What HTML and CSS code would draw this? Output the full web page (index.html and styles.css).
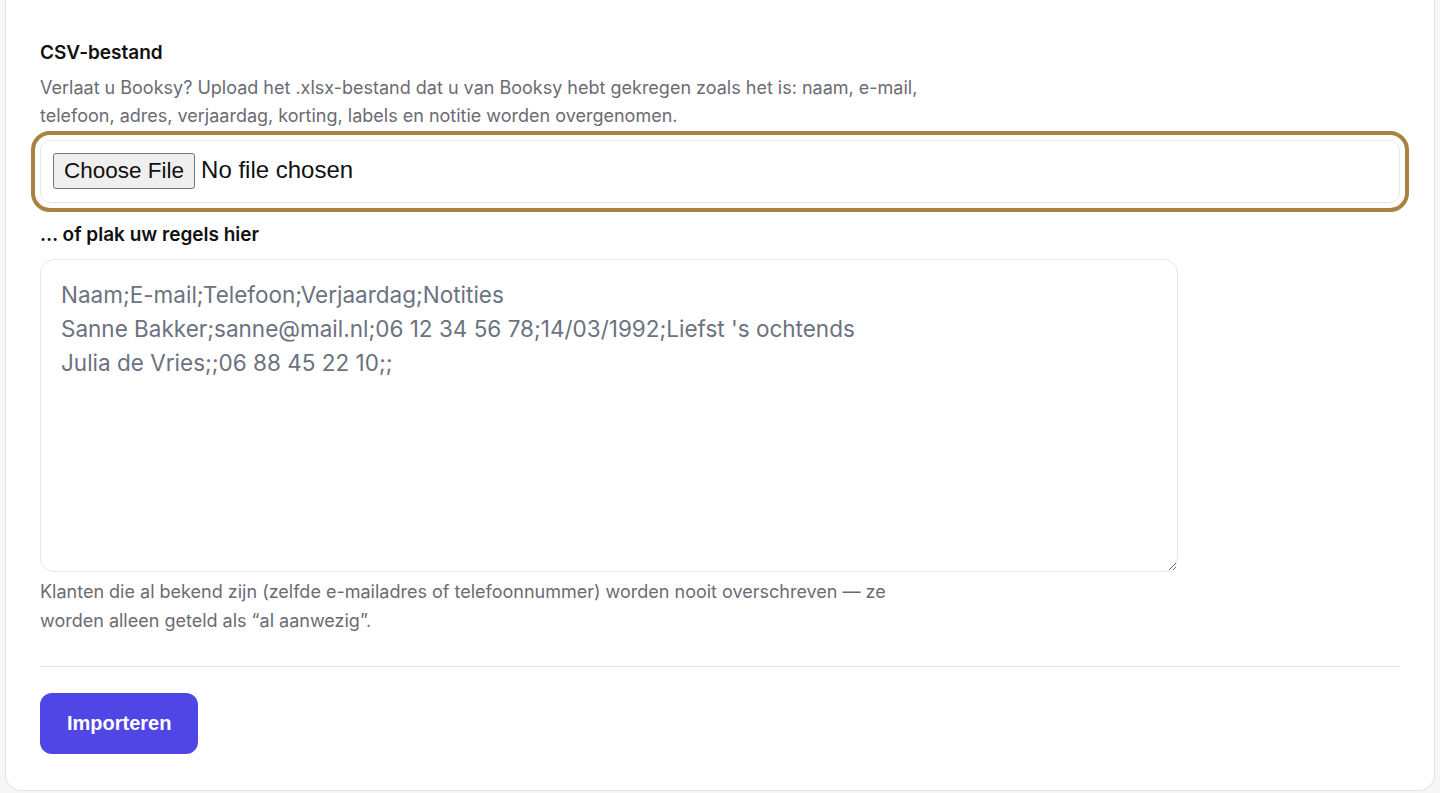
FILE: index.html
```html
<!DOCTYPE html>
<html lang="nl">
<head>
    <meta charset="UTF-8">
    <title>Klanten importeren</title>
    <link rel="stylesheet" href="styles.css">
</head>
<body>
<div class="card">
    <form class="import-form">
        <label class="field-label" for="csv-file">CSV-bestand</label>
        <p class="hint">Verlaat u Booksy? Upload het .xlsx-bestand dat u van Booksy hebt gekregen zoals het is: naam, e-mail, telefoon, adres, verjaardag, korting, labels en notitie worden overgenomen.</p>
        <div class="file-wrap">
            <input class="file-input" id="csv-file" type="file" accept=".csv,.xlsx">
        </div>

        <label class="field-label paste-label" for="csv-rows">… of plak uw regels hier</label>
        <textarea class="rows" id="csv-rows" placeholder="Naam;E-mail;Telefoon;Verjaardag;Notities
Sanne Bakker;sanne@mail.nl;06 12 34 56 78;14/03/1992;Liefst 's ochtends
Julia de Vries;;06 88 45 22 10;;"></textarea>
        <p class="hint note">Klanten die al bekend zijn (zelfde e-mailadres of telefoonnummer) worden nooit overschreven — ze worden alleen geteld als “al aanwezig”.</p>

        <hr class="divider">
        <button class="btn-primary" type="button">Importeren</button>
    </form>
</div>
</body>
</html>
```

FILE: styles.css
```css
* {
    box-sizing: border-box;
}
body {
    margin: 0;
    padding: 0 5px 4px 5px;
    background-color: #f6f6f6;
    font-family: Inter, "Noto Sans", sans-serif;
    color: #111827;
}
.card {
    background-color: #fff;
    border: 1px solid #e4e4e7;
    border-top: 0;
    border-radius: 0 0 16px 16px;
    padding: 41px 34px 36px 34px;
}
.import-form {
    display: flex;
    flex-direction: column;
    align-items: flex-start;
}
.field-label {
    display: block;
    font-size: 19px;
    line-height: 24px;
    font-weight: 600;
    color: #111;
}
.hint {
    margin: 9px 0 0 0;
    max-width: 900px;
    font-size: 18px;
    line-height: 28px;
    color: #6b6b73;
}
.file-wrap {
    width: 100%;
    margin-top: 10px;
}
.file-input {
    display: block;
    width: 100%;
    padding: 12px 12px 13px 12px;
    border: 1px solid #e5e7eb;
    border-radius: 10px;
    background: #fff;
    font: 24px "Liberation Sans", Arial, sans-serif;
    color: #111;
    outline: 4px solid #a98143;
    outline-offset: 5px;
}
.file-input::file-selector-button {
    font: 22.5px "Liberation Sans", Arial, sans-serif;
    height: 36px;
    padding: 0 10px;
    margin-right: 6px;
    border: 1px solid #767676;
    border-radius: 3px;
    background-color: #efefef;
    color: #111;
}
.paste-label {
    margin-top: 20px;
}
.rows {
    display: block;
    width: 1138px;
    height: 313px;
    margin-top: 12px;
    padding: 18px 20px;
    border: 1px solid #e5e7eb;
    border-radius: 14px;
    font-family: Inter, "Noto Sans", sans-serif;
    font-size: 22.5px;
    line-height: 34px;
    color: #111;
    resize: vertical;
    outline: none;
}
.rows::placeholder {
    color: #6b7280;
}
.note {
    margin-top: 5px;
    line-height: 29px;
}
.divider {
    align-self: stretch;
    margin: 31px 0 26px 0;
    border: 0;
    border-top: 1px solid #e0e0e0;
}
.btn-primary {
    padding: 0 27px;
    height: 61px;
    border: 0;
    border-radius: 12px;
    background-color: #4f46e5;
    color: #fff;
    font: bold 20px "Liberation Sans", Arial, sans-serif;
    cursor: pointer;
}
```
